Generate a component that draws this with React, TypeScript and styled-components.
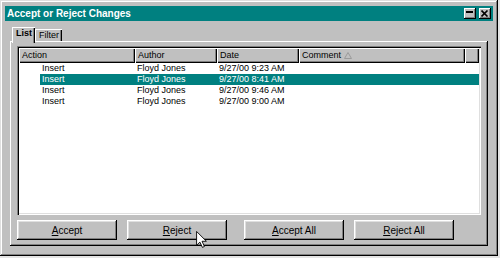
import styled, { createGlobalStyle } from 'styled-components';

// Change-tracking rows shown in the list
const changes = [
    { action: 'Insert', author: 'Floyd Jones', date: '9/27/00 9:23 AM', comment: '' },
    { action: 'Insert', author: 'Floyd Jones', date: '9/27/00 8:41 AM', comment: '', selected: true },
    { action: 'Insert', author: 'Floyd Jones', date: '9/27/00 9:46 AM', comment: '' },
    { action: 'Insert', author: 'Floyd Jones', date: '9/27/00 9:00 AM', comment: '' },
];

const columns = [
    { label: 'Action', width: 116 },
    { label: 'Author', width: 82 },
    { label: 'Date', width: 82 },
    { label: 'Comment', width: 166, sorted: true },
];

const GlobalStyle = createGlobalStyle`
  html, body {
    margin: 0;
    padding: 0;
    background: #e4e4e4;
  }
  body {
    font-family: "Liberation Sans", Arial, sans-serif;
    color: #000;
  }
`;

const Window = styled.div`
  position: relative;
  width: 498px;
  height: 256px;
  box-sizing: border-box;
  padding: 6px 5px 0;
  background: #c0c0c0;
  box-shadow: inset -1px -1px #000, inset 1px 1px #dfdfdf,
    inset -2px -2px #808080, inset 2px 2px #fff;
  display: flex;
  flex-direction: column;
`;

const TitleBar = styled.div`
  height: 15px;
  background: #008080;
  color: #fff;
  display: flex;
  align-items: center;
  justify-content: space-between;
  padding: 0 2px;
`;

const Caption = styled.span`
  font-size: 10px;
  font-weight: bold;
  letter-spacing: 0;
`;

const CaptionButtons = styled.div`
  display: flex;
  gap: 3px;
`;

const CaptionButton = styled.div`
  width: 12px;
  height: 11px;
  background: #c0c0c0;
  box-shadow: inset -1px -1px #000, inset 1px 1px #fff, inset -2px -2px #808080;
  display: flex;
  align-items: center;
  justify-content: center;
`;

const Body = styled.div`
  padding: 5px 5px 0;
  display: flex;
  flex-direction: column;
`;

const TabRow = styled.div`
  height: 15px;
  display: flex;
  align-items: flex-end;
  padding-left: 2px;
`;

const Tab = styled.div<{ $active?: boolean }>`
  position: relative;
  z-index: ${(p) => (p.$active ? 2 : 1)};
  height: ${(p) => (p.$active ? 16 : 12)}px;
  margin-bottom: ${(p) => (p.$active ? -2 : 0)}px;
  padding: 0 3px 0 4px;
  background: #c0c0c0;
  font-size: 9px;
  font-weight: ${(p) => (p.$active ? 'bold' : 'normal')};
  line-height: ${(p) => (p.$active ? 13 : 12)}px;
  box-shadow: inset 1px 1px #fff, inset -1px 0 #000, inset -2px 0 #808080;
`;

const Panel = styled.div`
  height: 205px;
  box-sizing: border-box;
  padding: 5px 7px 6px;
  background: #c0c0c0;
  box-shadow: inset -1px -1px #000, inset 1px 1px #fff, inset -2px -2px #808080;
  display: flex;
  flex-direction: column;
`;

const ListView = styled.div`
  height: 169px;
  box-sizing: border-box;
  padding: 2px;
  background: #fff;
  box-shadow: inset 1px 1px #808080, inset 2px 2px #000,
    inset -1px -1px #fff, inset -2px -2px #dfdfdf;
`;

const HeaderRow = styled.div`
  display: flex;
  height: 15px;
`;

const HeaderCell = styled.div<{ $width?: number }>`
  ${(p) => (p.$width ? `width: ${p.$width}px;` : 'flex: 1;')}
  box-sizing: border-box;
  padding-left: 3px;
  background: #c0c0c0;
  font-size: 9px;
  line-height: 15px;
  display: flex;
  align-items: center;
  gap: 3px;
  box-shadow: inset 1px 1px #fff, inset -1px -1px #000, inset -2px -2px #808080;
`;

const Row = styled.div`
  display: flex;
  height: 11px;
  font-size: 9px;
  line-height: 11px;
`;

const Indent = styled.div`
  width: 21px;
`;

const RowBody = styled.div<{ $selected?: boolean }>`
  flex: 1;
  display: flex;
  background: ${(p) => (p.$selected ? '#008080' : 'transparent')};
  color: ${(p) => (p.$selected ? '#fff' : '#000')};
`;

const Cell = styled.div<{ $width?: number }>`
  ${(p) => (p.$width ? `width: ${p.$width}px;` : 'flex: 1;')}
  box-sizing: border-box;
  padding-left: 2px;
  white-space: nowrap;
`;

const ButtonRow = styled.div`
  margin-top: 5px;
  display: flex;
  gap: 17px;
`;

const ButtonGroup = styled.div`
  display: flex;
  gap: 10px;
`;

const Button = styled.div`
  width: 100px;
  height: 20px;
  box-sizing: border-box;
  background: #c0c0c0;
  font-size: 10px;
  display: flex;
  align-items: center;
  justify-content: center;
  box-shadow: inset -1px -1px #000, inset 1px 1px #fff,
    inset -2px -2px #808080, inset 2px 2px #dfdfdf;
`;

const Cursor = styled.svg`
  position: absolute;
  left: 196px;
  top: 231px;
`;

function SortArrow() {
    return (
        <svg width="8" height="7" viewBox="0 0 8 7">
            <path d="M4 0.5 L7.5 6.5 L0.5 6.5 Z" fill="none" stroke="#9a9a9a" strokeWidth="1" />
        </svg>
    );
}

function Label({ text }: { text: string }) {
    return (
        <span>
            <u>{text[0]}</u>
            {text.slice(1)}
        </span>
    );
}

export default function App() {
    return (
        <>
            <GlobalStyle />
            <Window>
                <TitleBar>
                    <Caption>Accept or Reject Changes</Caption>
                    <CaptionButtons>
                        <CaptionButton>
                            <svg width="8" height="7" viewBox="0 0 8 7">
                                <rect x="0" y="1" width="7" height="2" fill="#000" />
                            </svg>
                        </CaptionButton>
                        <CaptionButton>
                            <svg width="8" height="7" viewBox="0 0 8 7">
                                <path d="M0.5 0.5 L6.5 6.5 M6.5 0.5 L0.5 6.5" stroke="#000" strokeWidth="1.6" />
                            </svg>
                        </CaptionButton>
                    </CaptionButtons>
                </TitleBar>
                <Body>
                    <TabRow>
                        <Tab $active>List</Tab>
                        <Tab>Filter</Tab>
                    </TabRow>
                    <Panel>
                        <ListView>
                            <HeaderRow>
                                {columns.map((col) => (
                                    <HeaderCell key={col.label} $width={col.width}>
                                        {col.label}
                                        {col.sorted && <SortArrow />}
                                    </HeaderCell>
                                ))}
                                <HeaderCell />
                            </HeaderRow>
                            {changes.map((c, i) => (
                                <Row key={i}>
                                    <Indent />
                                    <RowBody $selected={c.selected}>
                                        <Cell $width={95}>{c.action}</Cell>
                                        <Cell $width={82}>{c.author}</Cell>
                                        <Cell $width={82}>{c.date}</Cell>
                                        <Cell>{c.comment}</Cell>
                                    </RowBody>
                                </Row>
                            ))}
                        </ListView>
                        <ButtonRow>
                            <ButtonGroup>
                                <Button><Label text="Accept" /></Button>
                                <Button><Label text="Reject" /></Button>
                            </ButtonGroup>
                            <ButtonGroup>
                                <Button><Label text="Accept All" /></Button>
                                <Button><Label text="Reject All" /></Button>
                            </ButtonGroup>
                        </ButtonRow>
                    </Panel>
                </Body>
                <Cursor width="11" height="17" viewBox="0 0 12 19">
                    <path d="M0.5 0.5 L0.5 16 L4.2 12.4 L7 18.3 L9.3 17.3 L6.6 11.5 L11.5 11.5 Z" fill="#fff" stroke="#000" strokeWidth="1" />
                </Cursor>
            </Window>
        </>
    );
}
